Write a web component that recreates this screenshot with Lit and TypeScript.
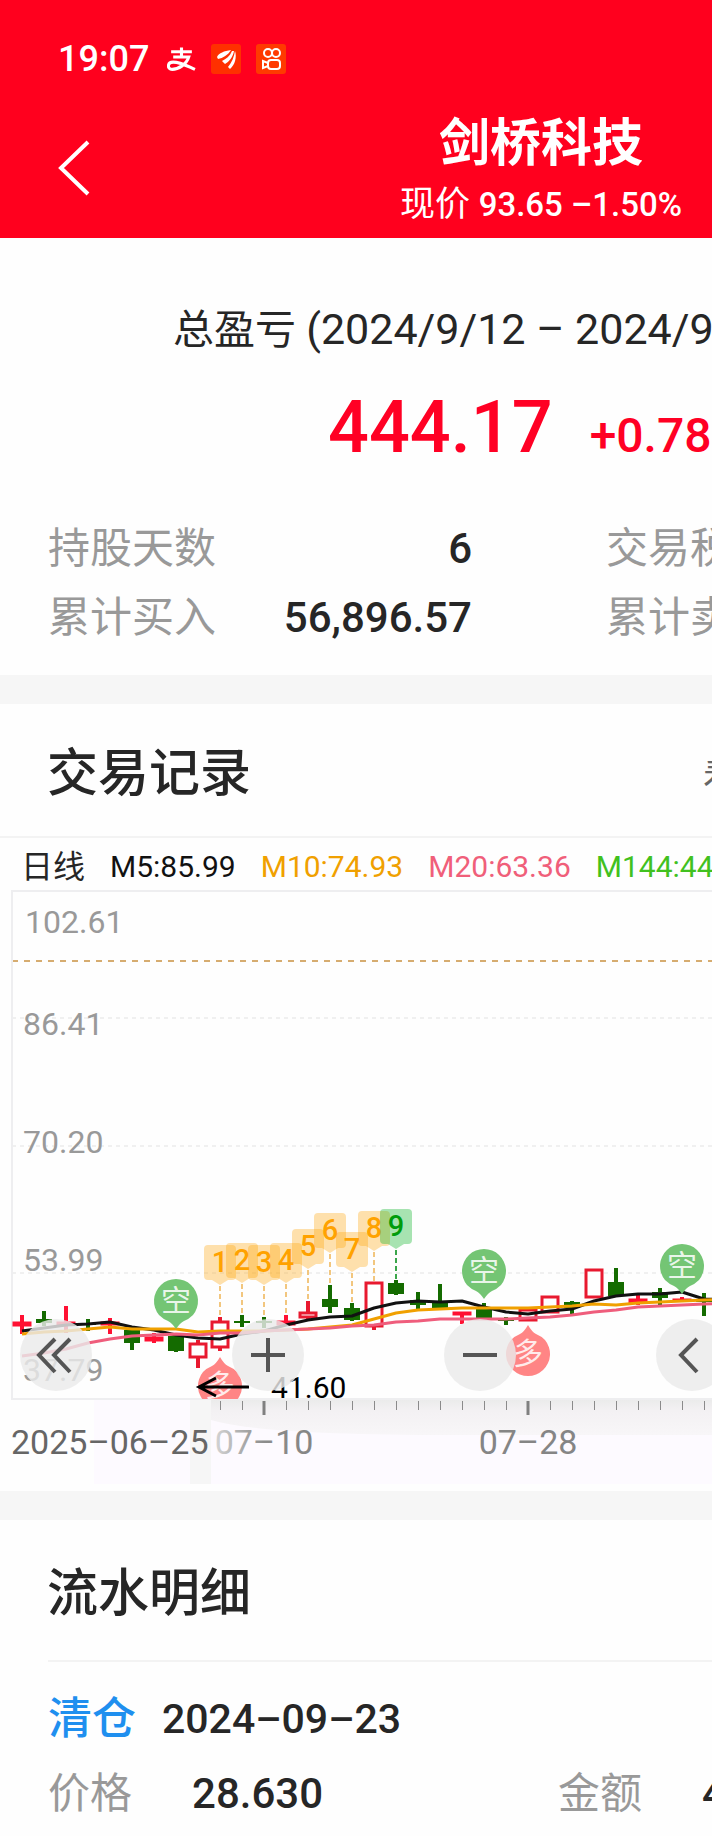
import { LitElement, html, svg, css } from "lit";
import { customElement } from "lit/decorators.js";

type Candle = {
  dir: "up" | "down";
  high: number;
  low: number;
  top: number;
  bottom: number;
  hollow?: boolean;
};

const up = (high: number, low: number, top: number, bottom: number, hollow = false): Candle => ({
  dir: "up", high, low, top, bottom, hollow,
});
const down = (high: number, low: number, top: number, bottom: number): Candle => ({
  dir: "down", high, low, top, bottom,
});

// Horizontal distance between two trading days, and the first day's centre.
const STEP = 22;
const FIRST = 22;
const dayX = (i: number) => FIRST + STEP * i;

const CANDLES: Candle[] = [
  up(425, 444, 432, 436), down(421, 436, 429, 433), up(416, 443, 432, 435), down(429, 441, 433, 435),
  up(428, 444, 432, 435), down(440, 460, 440, 453), up(443, 453, 447, 451), down(446, 462, 446, 461),
  up(450, 478, 453, 468, true), up(427, 461, 431, 458, true), down(425, 437, 431, 433),
  down(427, 438, 431, 433), up(425, 436, 431, 435), up(411, 429, 422, 428, true),
  down(395, 423, 409, 417), down(413, 431, 418, 430), up(392, 440, 392, 437, true),
  down(390, 405, 393, 404), down(402, 419, 410, 415), down(394, 420, 413, 418),
  up(422, 434, 422, 425), down(413, 428, 418, 428), down(427, 435, 429, 431),
  up(419, 431, 419, 431, true), up(406, 423, 406, 423, true), down(411, 424, 412, 418),
  up(379, 408, 379, 408, true), down(378, 407, 392, 406), up(405, 415, 409, 413),
  down(398, 416, 402, 408), up(407, 411, 409, 411), down(403, 426, 410, 412),
];

const MA5 = [441, 438, 435, 434, 432, 437, 440, 445, 448, 449, 444, 441, 435, 430, 427, 426, 418, 413, 411, 412, 411, 417, 422, 424, 421, 419, 411, 406, 404, 404, 402, 409, 410];
const MA10 = [444, 442, 441, 439, 437, 439, 439, 439, 442, 441, 441, 441, 440, 439, 437, 435, 429, 423, 420, 419, 418, 418, 418, 418, 417, 416, 414, 415, 413, 412, 411, 410, 409];
const MA20 = [466, 463, 459, 453, 449, 446, 445, 444, 445, 443, 443, 441, 440, 439, 438, 436, 435, 432, 431, 429, 429, 429, 429, 428, 427, 425, 422, 420, 417, 416, 415, 414, 413];

const COUNTS = [
  { n: 1, day: 9, y: 355 }, { n: 2, day: 10, y: 353 }, { n: 3, day: 11, y: 355 },
  { n: 4, day: 12, y: 353 }, { n: 5, day: 13, y: 339 }, { n: 6, day: 14, y: 323 },
  { n: 7, day: 15, y: 342 }, { n: 8, day: 16, y: 321 }, { n: 9, day: 17, y: 319 },
];

const points = (ys: number[]) => ys.map((y, i) => `${dayX(i)},${y}`).join(" ");

@customElement("kline-chart")
export class KlineChart extends LitElement {
  static styles = css`
    :host { display: block; position: relative; overflow: hidden; }
    .plot { display: block; width: 100%; height: 601px; font-family: Roboto, "Liberation Sans", "Noto Sans CJK SC", sans-serif; }
    .frame { stroke: #eeeef0; stroke-width: 2; }
    .grid { stroke: #f0f0f0; stroke-width: 2; stroke-dasharray: 4 4; }
    .price { stroke: #d6ac70; stroke-width: 2; stroke-dasharray: 6 6; }
    .axis { font-size: 32px; fill: #999; }
    .date { font-size: 34px; fill: #858585; }
    .date.first { fill: #666; }
    .date.faded { fill: url(#fade); }
    .middle { text-anchor: middle; }
    .low { font-size: 30px; fill: #000; }
    .up { stroke: #e8192f; fill: #e8192f; }
    .up.flat { stroke: #ff1133; fill: #ff1133; }
    .up.hollow { fill: #fff; }
    .down { stroke: #146b00; fill: #146b00; }
    .wick { stroke-width: 4; }
    .box { stroke-width: 3; }
    .solid { stroke: none; }
    .ma { fill: none; stroke-width: 3; stroke-linejoin: round; }
    .ma5 { stroke: #111; }
    .ma10 { stroke: #f0a000; }
    .ma20 { stroke: #ef5d7c; }
    .tag { fill: #ffa200; fill-opacity: 0.32; }
    .tag.done { fill: #0db52a; fill-opacity: 0.36; }
    .num { font-size: 29px; font-weight: 500; fill: #ffa200; text-anchor: middle; }
    .num.done { fill: #009c0c; }
    .lead { stroke: #f2c67e; stroke-width: 2; stroke-dasharray: 5 3; }
    .lead.done { stroke: #3aa64a; }
    .short { fill: #74c574; }
    .long { fill: #ff8585; }
    .sign { font-size: 30px; fill: #fff; fill-opacity: 0.85; text-anchor: middle; font-family: "Noto Sans CJK SC", sans-serif; }
    .arrow { fill: none; stroke: #000; stroke-width: 3; }
    .tick { stroke: #8a8a8a; stroke-width: 1; }
    .major { stroke: #808080; stroke-width: 3; }
    .tools { position: absolute; left: 20px; top: 429px; display: flex; gap: 140px; }
    .tool { flex: none; width: 72px; height: 72px; padding: 0; border: 0; border-radius: 50%; background: rgba(234, 234, 234, 0.82); }
    .glyph { display: block; width: 72px; height: 72px; fill: none; stroke: #555; stroke-width: 4; }
  `;

  private candle(c: Candle, i: number) {
    const x = dayX(i);
    const half = c.dir === "up" ? 9 : 8;
    if (c.hollow) {
      return svg`
        <line class="up wick" x1=${x} x2=${x} y1=${c.high} y2=${c.low}></line>
        <rect class="up box hollow" x=${x - 8} width="16" y=${c.top + 1} height=${Math.max(c.bottom - c.top - 2, 3)}></rect>`;
    }
    const cls = c.dir === "up" ? "up flat" : "down";
    return svg`
      <line class="${cls} wick" x1=${x} x2=${x} y1=${c.high} y2=${c.low}></line>
      <rect class="${cls} solid" x=${x - half} width=${half * 2} y=${c.top} height=${c.bottom - c.top}></rect>`;
  }

  private count(c: { n: number; day: number; y: number }) {
    const x = dayX(c.day);
    const done = c.n === 9 ? "done" : "";
    return svg`
      <line class="lead ${done}" x1=${x} x2=${x} y1=${c.y + 41} y2=${CANDLES[c.day].high}></line>
      <path class="tag ${done}" d="M${x - 12} ${c.y}h24a4 4 0 0 1 4 4v27a4 4 0 0 1-4 4h-4l-8 5l-8-5h-4a4 4 0 0 1-4-4v-27a4 4 0 0 1 4-4z"></path>
      <text class="num ${done}" x=${x} y=${c.y + 27}>${c.n}</text>`;
  }

  private shortPin(x: number, y: number) {
    return svg`
      <path class="short" d="M${x - 17} ${y + 14}a22 22 0 1 1 34 0q-4 4-9 6q-4 2-8 8q-4-6-8-8q-5-2-9-6z"></path>
      <text class="sign" x=${x} y=${y + 10}>空</text>`;
  }

  private longPin(x: number, y: number) {
    return svg`
      <path class="long" d="M${x - 17} ${y - 14}a22 22 0 1 0 34 0q-4-4-9-6q-4-2-8-9q-4 7-8 9q-5 2-9 6z"></path>
      <text class="sign" x=${x} y=${y + 10}>多</text>`;
  }

  render() {
    const ticks = Array.from({ length: 48 }, (_, i) => i + 9);
    return html`
      <svg class="plot" role="img" aria-label="日线">
        <defs>
          <linearGradient id="shade" x1="0" y1="0" x2="0" y2="1">
            <stop offset="0" stop-color="#ebebeb"></stop>
            <stop offset="0.3" stop-color="#f3f1f3"></stop>
            <stop offset="1" stop-color="#f8f6f8"></stop>
          </linearGradient>
          <linearGradient id="fade" x1="0" x2="1" y1="0" y2="0">
            <stop offset="0" stop-color="#d4d4d4"></stop>
            <stop offset="0.5" stop-color="#8c8c8c"></stop>
            <stop offset="1" stop-color="#858585"></stop>
          </linearGradient>
          <clipPath id="area"><rect x="12" y="0" width="100%" height="509"></rect></clipPath>
        </defs>
        <rect x="94" y="510" width="100%" height="84" fill="#fdfaff"></rect>
        <rect x="190" y="510" width="21" height="84" fill="#f6f6f6"></rect>
        <path d="M211 510H2000V545H450Q260 545 211 530z" fill="url(#shade)"></path>

        <line class="grid" x1="12" x2="100%" y1="128" y2="128"></line>
        <line class="grid" x1="12" x2="100%" y1="256" y2="256"></line>
        <line class="grid" x1="12" x2="100%" y1="383" y2="383"></line>
        <line class="price" x1="12" x2="100%" y1="71" y2="71"></line>
        <line class="frame" x1="12" x2="100%" y1="1" y2="1"></line>
        <line class="frame" x1="12" x2="100%" y1="509" y2="509"></line>
        <line class="frame" x1="12" x2="12" y1="0" y2="510"></line>
        <text class="axis" x="25" y="43">102.61</text>
        <text class="axis" x="23" y="145">86.41</text>
        <text class="axis" x="23" y="263">70.20</text>
        <text class="axis" x="23" y="381">53.99</text>
        <text class="axis" x="23" y="491">37.79</text>

        ${CANDLES.map((c, i) => this.candle(c, i))}
        <polyline class="ma ma5" points=${points(MA5)}></polyline>
        <polyline class="ma ma10" points=${points(MA10)}></polyline>
        <polyline class="ma ma20" points=${points(MA20)}></polyline>
        ${COUNTS.map((c) => this.count(c))}
        ${this.shortPin(dayX(7), 411)} ${this.shortPin(dayX(21), 381)} ${this.shortPin(dayX(30), 376)}
        ${this.longPin(dayX(23), 464)}
        <g clip-path="url(#area)">${this.longPin(dayX(9), 496)}</g>
        <path class="arrow" d="M249 497H200M216 488L199 497L216 506"></path>
        <text class="low" x="271" y="508">41.60</text>

        ${ticks.map((i) => {
          const major = (i + 1) % 12 === 0;
          const x = major ? dayX(i) : dayX(i) + 0.5;
          return svg`<line class="tick ${major ? "major" : ""}" x1=${x} x2=${x} y1="511" y2=${major ? 525 : 520}></line>`;
        })}
        <text class="date first" x="11" y="564">2025–06–25</text>
        <text class="date middle faded" x=${dayX(11)} y="564">07–10</text>
        <text class="date middle" x=${dayX(23)} y="564">07–28</text>
      </svg>
      <div class="tools">
        <button class="tool" aria-label="最早"><svg class="glyph" viewBox="0 0 72 72"><path d="M35 20L19 36L35 53M50 20L34 36L50 53"></path></svg></button>
        <button class="tool" aria-label="放大"><svg class="glyph" viewBox="0 0 72 72"><path d="M36 19V53M19 36H53"></path></svg></button>
        <button class="tool" aria-label="缩小"><svg class="glyph" viewBox="0 0 72 72"><path d="M19 36H53"></path></svg></button>
        <button class="tool" aria-label="向前"><svg class="glyph" viewBox="0 0 72 72"><path d="M41 20L25 36L41 53"></path></svg></button>
      </div>`;
  }
}

@customElement("app-root")
export class AppRoot extends LitElement {
  static styles = css`
    :host {
      display: block;
      overflow: hidden;
      min-height: 100vh;
      background: #fefefe;
      color: #262626;
      white-space: nowrap;
      font-family: Roboto, "Liberation Sans", "Noto Sans CJK SC", sans-serif;
    }
    h1, h2, p, dl, dd, dt { margin: 0; font-weight: inherit; }
    .head { background: #ff001e; color: #fff; padding: 36px 30px 10px 48px; }
    .status { display: flex; align-items: center; height: 46px; padding-left: 10px; }
    .clock { font-size: 36px; line-height: 46px; font-weight: 500; margin-right: 18px; }
    .app { flex: none; display: block; width: 30px; height: 30px; margin-right: 15px; }
    .pay { width: 29px; }
    .nav { display: flex; align-items: center; justify-content: space-between; margin-top: 32px; }
    .back { padding: 0; border: 0; background: none; color: inherit; width: 52px; height: 64px; }
    .chevron { display: block; width: 52px; height: 64px; fill: none; stroke: #fff; stroke-width: 4; }
    .name { text-align: center; }
    .title { font-size: 51px; line-height: 60px; font-weight: 700; }
    .quote { margin-top: 8px; font-size: 35px; line-height: 46px; }
    .figure { font-size: 33px; font-weight: 500; }

    .summary { padding: 63px 0 23px; }
    .range { padding-left: 173px; font-size: 41px; line-height: 56px; }
    .dates { font-size: 43px; }
    .profit { display: flex; align-items: baseline; gap: 37px; margin-top: 30px; padding-left: 328px; line-height: 80px; color: #ff0024; font-weight: 500; }
    .amount { font-size: 72px; }
    .rate { font-size: 48px; }
    .stats { display: grid; grid-template-columns: 424px 424px; column-gap: 134px; margin-top: 38px; padding-left: 48px; font-size: 42px; line-height: 69px; }
    .stat { display: flex; justify-content: space-between; }
    .label { color: #999; }
    .value { font-weight: 500; }
    .band { height: 29px; background: #f6f6f6; }

    .bar { box-sizing: border-box; display: flex; align-items: center; height: 134px; padding: 8px 0 0 47px; border-bottom: 2px solid #f3f3f3; }
    .section { flex: none; width: 656px; font-size: 51px; line-height: 60px; font-weight: 500; }
    .more { color: #666; font-size: 38px; text-decoration: none; }
    .legend { display: flex; gap: 25px; padding: 6px 0 0 21px; font-size: 30px; line-height: 46px; }
    .period { font-size: 32px; }
    .m5 { color: #111; }
    .m10 { color: #f0a000; }
    .m20 { color: #f05f7a; }
    .m144 { color: #41c11f; }

    .detail { box-sizing: border-box; height: 140px; display: flex; align-items: center; padding: 8px 0 0 47px; }
    .list { margin-left: 48px; border-top: 2px solid #f3f3f3; padding-top: 22px; font-size: 42px; }
    .entry { display: flex; align-items: center; gap: 26px; line-height: 70px; }
    .kind { font-size: 44px; color: #1f8fef; font-weight: 500; }
    .day { font-size: 41px; }
    .pairs { display: grid; grid-template-columns: 510px 510px; line-height: 80px; }
    .pair { display: flex; gap: 60px; }
  `;

  render() {
    return html`
      <header class="head">
        <div class="status">
          <span class="clock">19:07</span>
          <svg class="app pay" viewBox="0 0 28 24" fill="none" stroke="#fff" stroke-width="3">
            <path d="M4 5H24M14 1V10M6 10H21C19 17 11 22 5 22C0 22 0 15 6 15C13 15 20 19 27 22"></path>
          </svg>
          <svg class="app" viewBox="0 0 30 30">
            <rect width="30" height="30" rx="3" fill="#ff3000"></rect>
            <path fill="#fff" d="M6 13C8 9 13 7 20 6C17 11 12 14 7 15zM11 17C15 15 19 12 21 7L23 7C22 13 18 18 14 20zM17 23C21 18 23 13 24 7C26 13 24 21 19 25z"></path>
          </svg>
          <svg class="app" viewBox="0 0 30 30">
            <rect width="30" height="30" rx="3" fill="#ff3a00"></rect>
            <g fill="none" stroke="#fff" stroke-width="2">
              <circle cx="12" cy="9" r="4"></circle><circle cx="20" cy="9" r="4"></circle>
              <rect x="12" y="16" width="12" height="9" rx="3"></rect>
              <path d="M12 19L7 17V24L12 22"></path>
            </g>
          </svg>
        </div>
        <div class="nav">
          <button class="back" aria-label="返回">
            <svg class="chevron" viewBox="0 0 52 64"><path d="M40 3L13 29L40 55"></path></svg>
          </button>
          <div class="name">
            <h1 class="title">剑桥科技</h1>
            <p class="quote">现价 <span class="figure">93.65 –1.50%</span></p>
          </div>
        </div>
      </header>

      <section class="summary">
        <p class="range">总盈亏 <span class="dates">(2024/9/12 – 2024/9/23)</span></p>
        <p class="profit"><span class="amount">444.17</span><span class="rate">+0.78%</span></p>
        <dl class="stats">
          <div class="stat"><dt class="label">持股天数</dt><dd class="value">6</dd></div>
          <div class="stat"><dt class="label">交易税费</dt></div>
          <div class="stat"><dt class="label">累计买入</dt><dd class="value">56,896.57</dd></div>
          <div class="stat"><dt class="label">累计卖出</dt></div>
        </dl>
      </section>
      <div class="band"></div>

      <section>
        <div class="bar">
          <h2 class="section">交易记录</h2>
          <a class="more" href="#">看</a>
        </div>
        <div class="legend">
          <span class="period">日线</span>
          <span class="m5">M5:85.99</span>
          <span class="m10">M10:74.93</span>
          <span class="m20">M20:63.36</span>
          <span class="m144">M144:44</span>
        </div>
        <kline-chart></kline-chart>
      </section>
      <div class="band"></div>

      <section>
        <div class="detail"><h2 class="section">流水明细</h2></div>
        <div class="list">
          <div class="entry"><span class="kind">清仓</span><time class="value day">2024–09–23</time></div>
          <dl class="pairs">
            <div class="pair"><dt class="label">价格</dt><dd class="value">28.630</dd></div>
            <div class="pair"><dt class="label">金额</dt><dd class="value">4</dd></div>
          </dl>
        </div>
      </section>`;
  }
}
